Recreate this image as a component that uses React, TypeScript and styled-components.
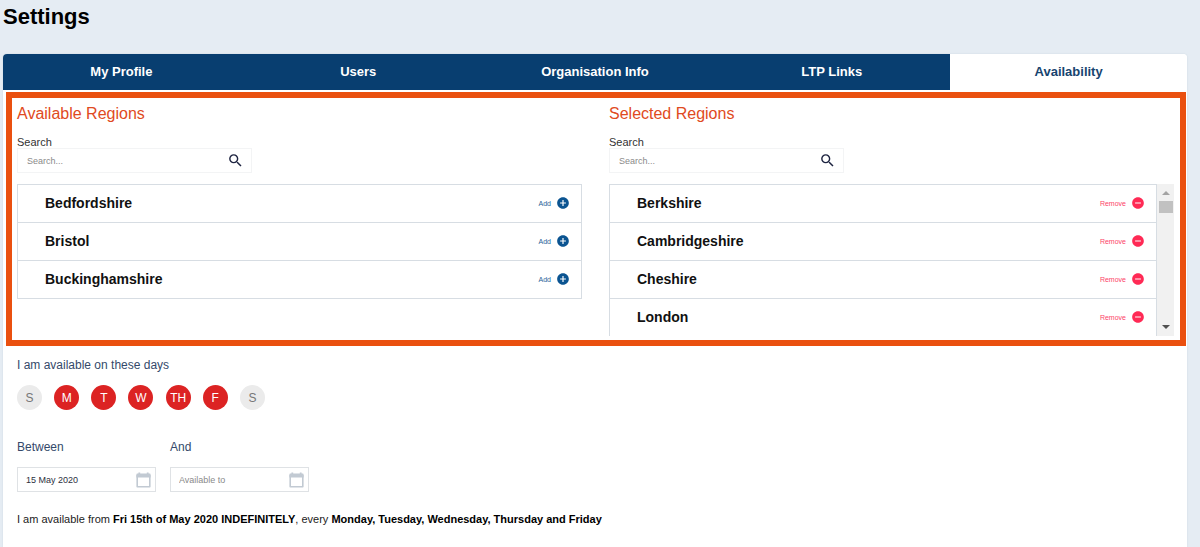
import React, { useState } from "react";
import styled, { createGlobalStyle, css } from "styled-components";
import { MdAddCircle, MdRemoveCircle, MdSearch } from "react-icons/md";

const GlobalStyle = createGlobalStyle`
  *, *::before, *::after { box-sizing: border-box; }
  body {
    margin: 0;
    background: #e5ecf3;
    color: #111;
    font-family: "Liberation Sans", Arial, sans-serif;
  }
  button, input { font-family: inherit; }
  h1, h2, p, ul { margin: 0; padding: 0; }
`;

const Page = styled.main`
  display: flex;
  flex-direction: column;
  min-height: 100vh;
  padding: 5px 13px 0 3px;
`;

const Title = styled.h1`
  margin-bottom: 25px;
  font-size: 22px;
  line-height: 24px;
  color: #000;
`;

const Card = styled.div`
  flex: 1;
  border-radius: 4px 4px 0 0;
  background: #fff;
  box-shadow: 0 0 2px rgba(40, 70, 100, 0.12);
`;

const Tabs = styled.nav`
  display: grid;
  grid-template-columns: repeat(5, 1fr);
  overflow: hidden;
  border-radius: 4px 4px 0 0;
`;

const Tab = styled.button<{ $active?: boolean }>`
  height: 36px;
  padding: 0 0 2px;
  border: 0;
  background: ${(p) => (p.$active ? "#fff" : "#083e70")};
  color: ${(p) => (p.$active ? "#17446f" : "#fff")};
  font-size: 13px;
  font-weight: bold;
  cursor: pointer;
`;

const Regions = styled.section`
  display: grid;
  grid-template-columns: 1fr 1fr;
  gap: 27px;
  margin: 2px 1px 0 3px;
  padding: 6px 6px 4px 5px;
  border: 6px solid #ea500f;
`;

const Column = styled.div`
  min-width: 0;
`;

const RegionTitle = styled.h2`
  margin-bottom: 12px;
  font-size: 16px;
  font-weight: normal;
  line-height: 20px;
  color: #df4a22;
`;

const SearchLabel = styled.label`
  display: block;
  font-size: 11px;
  line-height: 12px;
  color: #333;
`;

const Field = styled.div<{ $wide?: boolean }>`
  display: flex;
  align-items: center;
  width: ${(p) => (p.$wide ? "235px" : "139px")};
  height: 25px;
  border: 1px solid ${(p) => (p.$wide ? "#f3f4f5" : "#dfe2e5")};
`;

const FieldInput = styled.input<{ $inset: number }>`
  flex: 1;
  min-width: 0;
  height: 100%;
  padding: 0 0 0 ${(p) => p.$inset}px;
  border: 0;
  outline: 0;
  background: transparent;
  color: #2c2f3e;
  font-size: 9px;
  &::placeholder { color: #8a8a8a; opacity: 1; }
`;

const IconButton = styled.button`
  display: flex;
  margin: 0;
  padding: 0 4px;
  border: 0;
  background: none;
  color: #1d2340;
  cursor: pointer;
`;

const SearchButton = styled(IconButton)`
  padding: 0 7px;
`;

const ListFrame = styled.div`
  display: flex;
  height: 152px;
  margin-top: 11px;
`;

const RegionList = styled.ul`
  flex: 1;
  overflow: hidden;
  list-style: none;
`;

const RegionRow = styled.li`
  display: flex;
  align-items: center;
  justify-content: space-between;
  height: 39px;
  padding: 0 11px 1px 27px;
  border: 1px solid #d7dde3;
  font-size: 14px;
  font-weight: bold;
  line-height: 16px;
  & + & { margin-top: -1px; }
`;

const RowAction = styled.button<{ $danger?: boolean }>`
  display: flex;
  align-items: center;
  gap: 5px;
  padding: 0;
  border: 0;
  background: none;
  color: ${(p) => (p.$danger ? "#fc4468" : "#1f6399")};
  font-size: 7px;
  cursor: pointer;
  svg { color: ${(p) => (p.$danger ? "#ff2a55" : "#0b5491")}; }
`;

const ScrollTrack = styled.div`
  display: flex;
  flex-direction: column;
  align-items: center;
  width: 17px;
  background: #f1f1f1;
`;

const ScrollArrow = styled.span<{ $down?: boolean }>`
  width: 8px;
  height: 4px;
  border: 4px solid transparent;
  ${(p) =>
    p.$down
      ? css`margin: auto 0 7px; border-width: 4px 4px 0; border-top-color: #505050;`
      : css`margin: 7px 0 6px; border-width: 0 4px 4px; border-bottom-color: #a3a3a3;`}
`;

const ScrollThumb = styled.span`
  width: 14px;
  height: 12px;
  background: #c1c1c1;
`;

const Schedule = styled.section`
  padding: 11px 14px;
`;

const GroupLabel = styled.p`
  font-size: 12px;
  line-height: 16px;
  color: #34496a;
`;

const Days = styled.div`
  display: flex;
  justify-content: space-between;
  width: 248px;
  margin: 12px 0 29px;
`;

const Day = styled.label<{ $on: boolean }>`
  position: relative;
  display: flex;
  align-items: center;
  justify-content: center;
  width: 25px;
  height: 25px;
  border-radius: 50%;
  background: ${(p) => (p.$on ? "#dc2323" : "#ebebeb")};
  color: ${(p) => (p.$on ? "#fff" : "#777")};
  font-size: 12px;
  cursor: pointer;
`;

const DayCheck = styled.input`
  position: absolute;
  inset: 0;
  margin: 0;
  opacity: 0;
  cursor: pointer;
`;

const Dates = styled.div`
  display: flex;
  gap: 14px;
`;

const DateLabel = styled.label`
  display: block;
  margin-bottom: 12px;
  font-size: 12px;
  line-height: 16px;
  color: #34496a;
`;

const Summary = styled.p`
  margin-top: 19px;
  font-size: 11px;
  line-height: 16px;
  color: #222;
  strong { color: #000; }
`;

const CalendarIcon = () => (
  <svg width="15" height="16" viewBox="0 0 15 16" fill="none" aria-hidden="true">
    <path d="M1.2 3v11.8h12.6V3" stroke="#c2cad3" strokeWidth="1.6" strokeLinejoin="round" />
    <path d="M1.2 1.6h12.6a.8.8 0 0 1 .8.8V5.4H.4V2.4a.8.8 0 0 1 .8-.8zM2.4.4h1.8v1.4H2.4zM10.8.4h1.8v1.4h-1.8z" fill="#c2cad3" />
  </svg>
);

const tabs = ["My Profile", "Users", "Organisation Info", "LTP Links", "Availability"];
const available = ["Bedfordshire", "Bristol", "Buckinghamshire"];
const selected = ["Berkshire", "Cambridgeshire", "Cheshire", "London"];
const week = [
  ["Sunday", "S"],
  ["Monday", "M"],
  ["Tuesday", "T"],
  ["Wednesday", "W"],
  ["Thursday", "TH"],
  ["Friday", "F"],
  ["Saturday", "S"],
];

type RegionColumnProps = { id: string; title: string; regions: string[]; removable?: boolean };

function RegionColumn({ id, title, regions, removable }: RegionColumnProps) {
  return (
    <Column>
      <RegionTitle>{title}</RegionTitle>
      <SearchLabel htmlFor={id}>Search</SearchLabel>
      <Field $wide>
        <FieldInput id={id} $inset={9} placeholder="Search..." />
        <SearchButton aria-label="Search">
          <MdSearch size={17} />
        </SearchButton>
      </Field>
      <ListFrame>
        <RegionList>
          {regions.map((region) => (
            <RegionRow key={region}>
              {region}
              <RowAction $danger={removable}>
                {removable ? "Remove" : "Add"}
                {removable ? <MdRemoveCircle size={14} /> : <MdAddCircle size={14} />}
              </RowAction>
            </RegionRow>
          ))}
        </RegionList>
        {removable && (
          <ScrollTrack aria-hidden="true">
            <ScrollArrow />
            <ScrollThumb />
            <ScrollArrow $down />
          </ScrollTrack>
        )}
      </ListFrame>
    </Column>
  );
}

export default function App() {
  const [days, setDays] = useState([false, true, true, true, true, true, false]);
  const toggle = (index: number) => setDays(days.map((on, i) => (i === index ? !on : on)));

  return (
    <>
      <GlobalStyle />
      <Page>
        <Title>Settings</Title>
        <Card>
          <Tabs>
            {tabs.map((tab) => (
              <Tab key={tab} $active={tab === "Availability"}>{tab}</Tab>
            ))}
          </Tabs>
          <Regions>
            <RegionColumn id="search-available" title="Available Regions" regions={available} />
            <RegionColumn id="search-selected" title="Selected Regions" regions={selected} removable />
          </Regions>
          <Schedule>
            <GroupLabel>I am available on these days</GroupLabel>
            <Days>
              {week.map(([name, short], i) => (
                <Day key={name} $on={days[i]}>
                  <DayCheck type="checkbox" aria-label={name} checked={days[i]} onChange={() => toggle(i)} />
                  {short}
                </Day>
              ))}
            </Days>
            <Dates>
              <div>
                <DateLabel htmlFor="from">Between</DateLabel>
                <Field>
                  <FieldInput id="from" $inset={8} defaultValue="15 May 2020" />
                  <IconButton aria-label="Choose start date"><CalendarIcon /></IconButton>
                </Field>
              </div>
              <div>
                <DateLabel htmlFor="to">And</DateLabel>
                <Field>
                  <FieldInput id="to" $inset={8} placeholder="Available to" />
                  <IconButton aria-label="Choose end date"><CalendarIcon /></IconButton>
                </Field>
              </div>
            </Dates>
            <Summary>
              I am available from <strong>Fri 15th of May 2020 INDEFINITELY</strong>, every{" "}
              <strong>Monday, Tuesday, Wednesday, Thursday and Friday</strong>
            </Summary>
          </Schedule>
        </Card>
      </Page>
    </>
  );
}
